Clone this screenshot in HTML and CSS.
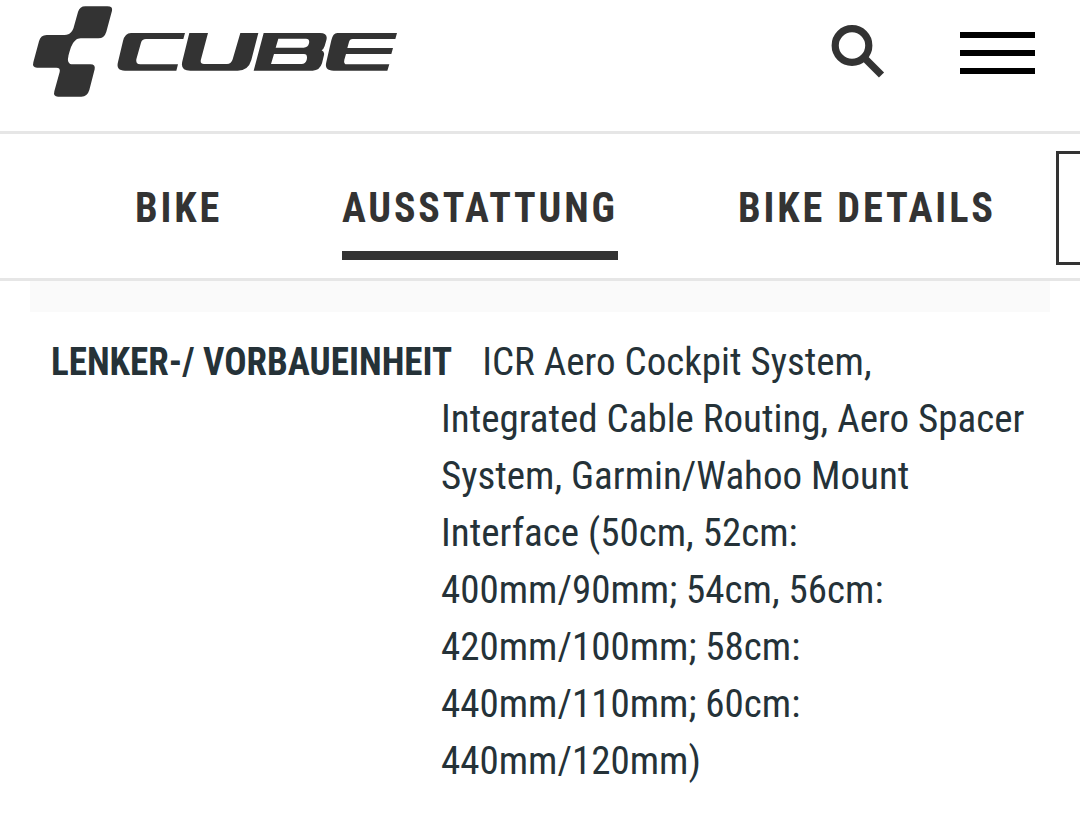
FILE: index.html
```html
<!DOCTYPE html>
<html lang="de">

<head>
    <meta charset="UTF-8">
    <meta name="viewport" content="width=device-width, initial-scale=1">
    <title>CUBE</title>
    <link rel="stylesheet" href="styles.css">
</head>

<body>
    <header>
        <a class="logo" href="#" aria-label="CUBE">
            <svg viewBox="0 0 1140 330" width="380" height="110">
                <path d="M196 19H262Q279 19 276 32L259 95Q253 115 235 115H182C158 115 150 150 145 170C141 184 147 193 158 193H211Q227 193 224 208L208 270Q202 290 184 290H114Q99 290 103 274L119 216Q122 203 109 203H51Q36 203 40 187L57 124Q62 105 80 105H134C151 105 159 93 162 79L174 36Q179 19 196 19Z" />
                <path d="M333 99H495L490 117H378Q366 117 363 128L349 178Q346 193 361 193H474L469 212H315Q287 212 294 186L309 123Q315 99 333 99Z" />
                <path d="M508 99H564L543 178Q539 192 552 192H621Q634 192 638 178L661 99H715L694 180Q685 212 653 212H511Q480 212 487 184Z" />
                <path fill-rule="evenodd" d="M731 99H900Q925 99 919 121L914 138Q911 147 905 151Q914 155 912 165L906 190Q899 212 878 212H701ZM775 116L767 143H851Q864 143 867 130Q870 116 858 116ZM762 162L753 192H845Q856 192 860 180Q864 162 852 162Z" />
                <path d="M952 99H1131L1126 117H998Q989 117 987 126L982 144H1119L1114 162H978L973 179Q970 193 981 193H1108L1102 212H941Q912 212 919 186L934 121Q939 99 952 99Z" />
            </svg>
        </a>
        <div class="tools">
            <svg class="search" viewBox="0 0 54 54" width="54" height="54">
                <circle cx="21" cy="20.500" r="16.800" />
                <path d="M32 31.500L50.500 50" />
            </svg>
            <div class="burger">
                <span></span>
                <span></span>
                <span></span>
            </div>
        </div>
    </header>
    <nav>
        <a href="#"><span>BIKE</span></a>
        <a class="active" href="#"><span>AUSSTATTUNG</span></a>
        <a href="#"><span>BIKE DETAILS</span></a>
        <button aria-label="Händler"></button>
    </nav>
    <main>
        <div class="row grey"></div>
        <dl class="row">
            <dt>LENKER-/ VORBAUEINHEIT</dt>
            <dd>ICR Aero Cockpit System, Integrated Cable Routing, Aero Spacer System, Garmin/Wahoo Mount Interface (50cm, 52cm: 400mm/90mm; 54cm, 56cm: 420mm/100mm; 58cm: 440mm/110mm; 60cm: 440mm/120mm)</dd>
        </dl>
    </main>
</body>

</html>
```
FILE: styles.css
```css
* {
    margin: 0;
    box-sizing: border-box;
}

body {
    font-family: "Roboto Condensed", Roboto, sans-serif;
    font-stretch: 75%;
    color: #253238;
    background: #fff;
    overflow: hidden;
}

header {
    display: flex;
    justify-content: space-between;
    height: 134px;
    padding: 0 45px 0 20px;
    border-bottom: 3px solid #e6e6e6;
}

.logo {
    fill: #333;
}

.tools {
    display: flex;
    gap: 75px;
    padding-top: 25px;
}

.search {
    fill: none;
    stroke: #333;
    stroke-width: 7.2;
}

.burger {
    display: flex;
    flex-direction: column;
    gap: 12px;
    width: 75px;
    padding-top: 7px;
}

.burger span {
    height: 6px;
    background: #000;
}

nav {
    display: grid;
    grid-template-columns: 87px 276px 258px 300px;
    column-gap: 120px;
    align-items: start;
    height: 147px;
    padding: 17px 0 0 135px;
    border-bottom: 3px solid #e6e6e6;
    overflow: hidden;
}

nav a {
    height: 109px;
    padding-top: 32px;
    color: #333;
    font-size: 42px;
    font-weight: bold;
    line-height: 49px;
    letter-spacing: 3px;
    white-space: nowrap;
    text-decoration: none;
}

nav a span {
    display: inline-block;
    transform: scaleX(.96);
    transform-origin: left;
}

nav .active {
    border-bottom: 9px solid #333;
}

nav .active span {
    transform: scaleX(.95);
}

nav button {
    height: 114px;
    margin-left: -60px;
    border: 3px solid #333;
    background: #fff;
}

main {
    padding: 0 30px;
}

.row {
    padding: 22px 21px;
    font-size: 39px;
    line-height: 57px;
}

.grey {
    height: 31px;
    padding: 0;
    background: #fafafa;
}

dt {
    float: left;
    margin-right: 9px;
    font-weight: bold;
    transform: scaleX(.95);
    transform-origin: left;
}

dd {
    margin-left: 390px;
}
```
